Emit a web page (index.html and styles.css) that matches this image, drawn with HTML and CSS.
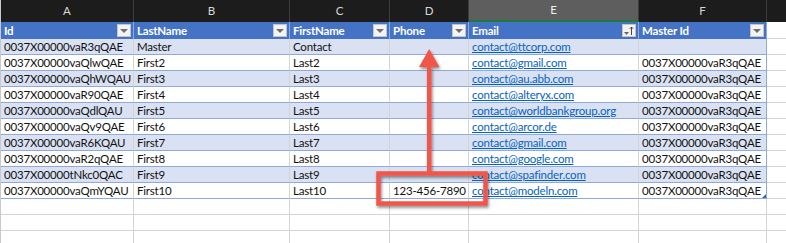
FILE: index.html
```html
<!DOCTYPE html>
<html>
<head>
<meta charset="utf-8">
<link rel="stylesheet" href="styles.css">
</head>
<body>
<div class="wrap">
<div class="sheet">
  <div class="row">
    <div class="ch">A</div><div class="ch">B</div><div class="ch">C</div><div class="ch">D</div><div class="ch sel">E</div><div class="ch">F</div><div class="ch last"></div>
  </div>
  <div class="row">
    <div class="th">Id<span class="dd"></span></div>
    <div class="th">LastName<span class="dd"></span></div>
    <div class="th">FirstName<span class="dd"></span></div>
    <div class="th">Phone<span class="dd"></span></div>
    <div class="th">Email<span class="dd sort"><svg width="13" height="12" viewBox="0 0 13 12"><path d="M2 7h5l-2.5 3z" fill="#666"/><path d="M9.5 2v8M7.8 3.8l1.7-1.8 1.7 1.8" stroke="#444" stroke-width="1" fill="none"/></svg></span></div>
    <div class="th">Master Id<span class="dd"></span></div>
    <div class="td out"></div>
  </div>
  <div class="row band">
    <div class="td">0037X00000vaR3qQAE</div><div class="td">Master</div><div class="td">Contact</div><div class="td"></div><div class="td"><a>contact@ttcorp.com</a></div><div class="td end"></div><div class="td out"></div>
  </div>
  <div class="row">
    <div class="td">0037X00000vaQlwQAE</div><div class="td">First2</div><div class="td">Last2</div><div class="td"></div><div class="td"><a>contact@gmail.com</a></div><div class="td end">0037X00000vaR3qQAE</div><div class="td out"></div>
  </div>
  <div class="row band">
    <div class="td">0037X00000vaQhWQAU</div><div class="td">First3</div><div class="td">Last3</div><div class="td"></div><div class="td"><a>contact@au.abb.com</a></div><div class="td end">0037X00000vaR3qQAE</div><div class="td out"></div>
  </div>
  <div class="row">
    <div class="td">0037X00000vaR90QAE</div><div class="td">First4</div><div class="td">Last4</div><div class="td"></div><div class="td"><a>contact@alteryx.com</a></div><div class="td end">0037X00000vaR3qQAE</div><div class="td out"></div>
  </div>
  <div class="row band">
    <div class="td">0037X00000vaQdlQAU</div><div class="td">First5</div><div class="td">Last5</div><div class="td"></div><div class="td"><a>contact@worldbankgroup.org</a></div><div class="td end">0037X00000vaR3qQAE</div><div class="td out"></div>
  </div>
  <div class="row">
    <div class="td">0037X00000vaQv9QAE</div><div class="td">First6</div><div class="td">Last6</div><div class="td"></div><div class="td"><a>contact@arcor.de</a></div><div class="td end">0037X00000vaR3qQAE</div><div class="td out"></div>
  </div>
  <div class="row band">
    <div class="td">0037X00000vaR6KQAU</div><div class="td">First7</div><div class="td">Last7</div><div class="td"></div><div class="td"><a>contact@gmail.com</a></div><div class="td end">0037X00000vaR3qQAE</div><div class="td out"></div>
  </div>
  <div class="row">
    <div class="td">0037X00000vaR2qQAE</div><div class="td">First8</div><div class="td">Last8</div><div class="td"></div><div class="td"><a>contact@google.com</a></div><div class="td end">0037X00000vaR3qQAE</div><div class="td out"></div>
  </div>
  <div class="row band">
    <div class="td">0037X00000tNkc0QAC</div><div class="td">First9</div><div class="td">Last9</div><div class="td"></div><div class="td"><a>contact@spafinder.com</a></div><div class="td end">0037X00000vaR3qQAE</div><div class="td out"></div>
  </div>
  <div class="row">
    <div class="td">0037X00000vaQmYQAU</div><div class="td">First10</div><div class="td">Last10</div><div class="td">123-456-7890</div><div class="td"><a>contact@modeln.com</a></div><div class="td end handle">0037X00000vaR3qQAE</div><div class="td out"></div>
  </div>
  <div class="row empty">
    <div class="td"></div><div class="td"></div><div class="td"></div><div class="td"></div><div class="td"></div><div class="td"></div><div class="td out"></div>
  </div>
  <div class="row empty">
    <div class="td"></div><div class="td"></div><div class="td"></div><div class="td"></div><div class="td"></div><div class="td"></div><div class="td out"></div>
  </div>
  <div class="row empty">
    <div class="td"></div><div class="td"></div><div class="td"></div><div class="td"></div><div class="td"></div><div class="td"></div><div class="td out"></div>
  </div>
</div>
<svg class="annot" width="786" height="243" viewBox="0 0 786 243">
  <defs>
    <filter id="sh" x="-20%" y="-20%" width="140%" height="160%">
      <feDropShadow dx="1" dy="2" stdDeviation="1.5" flood-color="#000" flood-opacity="0.45"/>
    </filter>
  </defs>
  <g filter="url(#sh)">
    <rect x="378.5" y="173.5" width="107" height="30" fill="none" stroke="#f0574a" stroke-width="4.5"/>
    <rect x="427" y="64" width="4.5" height="108" fill="#f0574a"/>
    <path d="M429.2 49 L439.5 67 L419 67 Z" fill="#f0574a"/>
  </g>
</svg>
</div>
</body>
</html>
```
FILE: styles.css
```css
html, body {
  margin: 0;
  padding: 0;
  background: #ffffff;
}
.wrap {
  position: relative;
  width: 786px;
  height: 243px;
  overflow: hidden;
}
.sheet {
  display: grid;
  grid-template-columns: 133px 156px 100px 79px 170px 128px 19px;
  grid-template-rows: 22px 17px repeat(13, 16px);
  border-left: 1px solid #c9c9c9;
  font-family: Lato, "Liberation Sans", sans-serif;
  font-size: 11.5px;
  letter-spacing: -0.2px;
  color: #111;
}
.row {
  display: contents;
}
.ch {
  background: #1c1c1c;
  color: #d8d8d8;
  text-align: center;
  line-height: 22px;
  font-size: 11.5px;
  letter-spacing: 0;
  border-right: 1px solid #3d3d3d;
  box-sizing: border-box;
}
.ch.sel {
  background: #5e5e5e;
  color: #f0f0f0;
  border-bottom: 2px solid #1f7a3f;
  line-height: 20px;
}
.ch.last {
  border-right: none;
}
.th {
  position: relative;
  background: #4472c4;
  color: #ffffff;
  font-weight: bold;
  line-height: 16px;
  padding: 1px 0 0 3px;
  box-sizing: border-box;
  border-right: 1px solid #8ea9db;
  white-space: nowrap;
}
.dd {
  position: absolute;
  right: 2px;
  top: 2px;
  width: 14px;
  height: 13px;
  box-sizing: border-box;
  background: #f3f3f3;
  border: 1px solid #c4c4c4;
}
.dd::after {
  content: "";
  position: absolute;
  left: 2px;
  top: 4px;
  border-left: 4px solid transparent;
  border-right: 4px solid transparent;
  border-top: 4px solid #707070;
}
.dd.sort::after {
  display: none;
}
.dd.sort svg {
  display: block;
  margin: 0 0 0 -1px;
}
.td {
  box-sizing: border-box;
  border-right: 1px solid #d4d4d4;
  border-bottom: 1px solid #8ea9db;
  padding: 0 3px;
  line-height: 15px;
  white-space: nowrap;
  overflow: hidden;
  background: #ffffff;
}
.band .td {
  background: #d9e1f2;
}
.td.end {
  border-right: 1px solid #8ea9db;
}
.band .td.out,
.td.out {
  background: #ffffff;
  border-right: none;
  border-bottom: 1px solid #d4d4d4;
}
.empty .td {
  border-bottom: 1px solid #d4d4d4;
}
a {
  color: #0563c1;
  text-decoration: underline;
}
.handle {
  position: relative;
}
.handle::after {
  content: "";
  position: absolute;
  right: 0;
  bottom: 0;
  border-left: 4px solid transparent;
  border-bottom: 4px solid #3a64b8;
}
.annot {
  position: absolute;
  left: 0;
  top: 0;
  pointer-events: none;
}
```
